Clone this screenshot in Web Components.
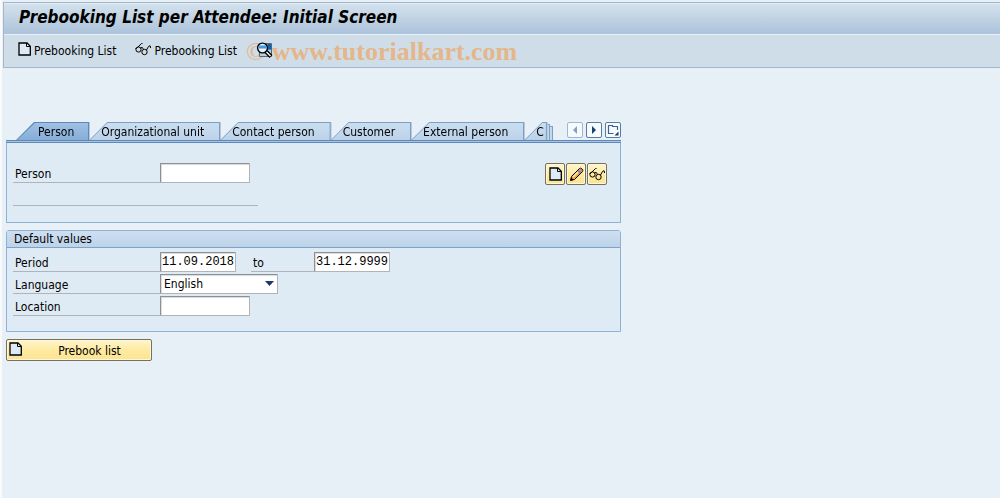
<!DOCTYPE html>
<html lang="en">
<head>
<meta charset="utf-8">
<title>Prebooking List per Attendee: Initial Screen</title>
<style>
  html { height: 100%; background: #e8f0f7; }
  body { margin: 0; min-height: 100%; box-sizing: border-box; border-left: 2px solid #f8fafc; font: 12px/16px "DejaVu Sans Condensed", "DejaVu Sans", Tahoma, sans-serif; color: #000; }
</style>
</head>
<body>
<prebooking-screen></prebooking-screen>
<script>
const define = (name, html, setup) => {
  const template = document.createElement('template');
  template.innerHTML = html;
  customElements.define(name, class extends HTMLElement {
    connectedCallback() {
      if (this.shadowRoot) return;
      this.attachShadow({ mode: 'open' }).append(template.content.cloneNode(true));
      if (setup) setup(this, this.shadowRoot);
    }
  });
};

const icons = {
  page: [13, 14, '<path d="M1.500 .5H8.500L12.500 4.500V13.500H1.500Z" fill="#dcebf6"/><path d="M8.500 .5V4.500H12.500Z" fill="#fff"/><path d="M1 1H9L12.300 4.300V13H1Z" fill="none" stroke="#000" stroke-width="1.300"/><path d="M8.500 1V4.500H12" fill="none" stroke="#000"/>'],
  glasses: [16, 14, '<g fill="none" stroke="#000"><path d="M.5 6.500H1.500L6.500 1.500H7.500M11.500 8L13.500 4.500Q15.500 2.500 15.500 5V6"/><circle cx="3.500" cy="7.500" r="2.600"/><circle cx="9.500" cy="10" r="2.700"/><path d="M5.500 6Q7.500 4 8.500 7.500"/></g>'],
  pencil: [15, 15, '<path d="M1.500 13.500L2.500 9.500L10.500 1.500Q12 .5 13 2Q14.500 3 13.500 4.500L5.500 12.500Z" fill="#f9a238" stroke="#000"/><path d="M4 10L10 4" stroke="#ffe8a8" stroke-width="1.700"/><path d="M9 3.500L11.500 6" stroke="#5b8fd6" stroke-width="2"/><path d="M11 2L13 4" stroke="#ee7a62" stroke-width="2"/><path d="M1.500 13.500L2.300 10.500L4.500 12.700Z" fill="#000"/>'],
  preview: [17, 16, '<path d="M3.500 1.500H15.500V14.500H3.500Z" fill="#b9cfe0" stroke="#5a6570"/><path d="M4 2H15V8H4Z" fill="#2d8fe0"/><path d="M12 2H15V7H12Z" fill="#0d61b5"/><circle cx="6.500" cy="6" r="4.900" fill="#e8f2fa" stroke="#000" stroke-width="1.400"/><path d="M3 3.500H10V6.500H3Z" fill="#3f9be6"/><path d="M10 9.500L15 14.500" stroke="#000" stroke-width="4"/><path d="M10.500 10L14.500 14" stroke="#fff" stroke-width="1.400"/>'],
  left: [8, 10, '<path d="M6 1V9L2 5Z" fill="#7fa2c5"/>'],
  right: [8, 10, '<path d="M2 1V9L6 5Z" fill="#173f68"/>'],
  tablist: [12, 12, '<path d="M6.500 9.500H1.500V1.500H5.500V2.500H10.500V6" fill="none" stroke="#3f658c" stroke-width="1.200"/><path d="M11.500 7.500V11.500H7.500Z" fill="#173f68"/>'],
  arrow: [9, 6, '<path d="M0 0H9L4.500 5Z" fill="#1f3864"/>']
};
define('sap-icon', '<style>:host{display:block;flex:none;line-height:0}svg{display:block}</style>', (el, root) => {
  const [w, h, art] = icons[el.getAttribute('name')];
  root.innerHTML += `<svg width="${w}" height="${h}" viewBox="0 0 ${w} ${h}" aria-hidden="true">${art}</svg>`;
});

const addIconAndLabel = (el, root) => {
  const button = root.querySelector('button');
  button.insertAdjacentHTML('afterbegin', `<sap-icon name="${el.getAttribute('icon')}"></sap-icon>`);
  if (el.hasAttribute('label')) button.setAttribute('aria-label', el.getAttribute('label'));
};

define('sap-title', `<style>
  :host{display:block;box-sizing:border-box;height:32px;padding:3px 15px 0;background:linear-gradient(#d3e1ed,#c0d2e2 50%,#acc3dc);border-bottom:1px solid #e9f0f6;border-top:1px solid #e3ecf4}
  h1{margin:0;font-size:17px;line-height:20px;font-weight:bold;font-style:italic;white-space:nowrap}
</style><h1><slot></slot></h1>`);

define('sap-toolbar', `<style>
  :host{display:flex;align-items:flex-start;box-sizing:border-box;height:32px;padding:7px 14px 0;gap:19px;background:#cfdde8;position:relative}
</style><slot></slot>`);

define('sap-action', `<style>
  :host{display:block;position:relative;z-index:1}
  button{display:flex;align-items:flex-start;gap:3px;margin:0;padding:0;border:0;background:none;font:inherit;color:inherit;white-space:nowrap}
  span{padding-top:1px}
</style><button type="button"><span><slot></slot></span></button>`, addIconAndLabel);

define('sap-watermark', `<style>
  :host{position:absolute;left:242px;top:1px;font:bold 26px/32px "Liberation Serif",serif;color:#e4b68a;pointer-events:none;white-space:nowrap;display:flex;gap:6px}
  .c{font-weight:normal}
</style><span class="c">©</span><span><slot></slot></span>`);

define('sap-tab', `<style>
  :host{display:block;flex:none;filter:drop-shadow(1px 0 0 #b7c8d9)}
  .edge{background:#7b9fc6;clip-path:polygon(0 100%,18px 0,100% 0,100% 100%);padding:1px 1px 0}
  button{display:block;box-sizing:border-box;margin:0;border:0;height:17px;padding:2px 15px 0 11px;font:inherit;line-height:15px;color:inherit;white-space:nowrap;background:linear-gradient(#cbdef0,#bbd2e8);clip-path:polygon(0 100%,17px 0,100% 0,100% 100%)}
  :host([selected]) .edge{background:#6089b8}
  :host([selected]) button{background:linear-gradient(#9fc0e3,#87aed8);padding:2px 14px 0 21px;clip-path:polygon(0 100%,18px 0,100% 0,100% 100%)}
  :host([cut]) button{padding-right:2px}
</style><div class="edge"><button type="button" role="tab"><slot></slot></button></div>`, (el, root) => {
  root.querySelector('button').setAttribute('aria-selected', el.hasAttribute('selected'));
});

define('sap-tab-nav', `<style>
  :host{display:flex;gap:3px;align-self:flex-start}
  button{display:grid;place-items:center;box-sizing:border-box;width:16px;height:16px;margin:0;padding:0;border:1px solid #587da5;border-radius:2px;background:#f7fafd}
  button:disabled{border-color:#9db8d3}
</style>
<button type="button" aria-label="Scroll left" disabled><sap-icon name="left"></sap-icon></button>
<button type="button" aria-label="Scroll right"><sap-icon name="right"></sap-icon></button>
<button type="button" aria-label="Tab list"><sap-icon name="tablist"></sap-icon></button>`);

define('sap-tabstrip', `<style>
  :host{display:block}
  .bar{display:flex;align-items:flex-end;height:18px;padding-left:10px}
  .tabs{display:flex}
  .stack{display:flex;align-items:flex-end}
  .stack i{box-sizing:border-box;width:3px;height:16px;background:#c5d9ec;border:solid #7b9fc6;border-width:1px 1px 0 0}
  .stack i + i{height:14px}
  sap-tab-nav{margin-left:auto}
  .panel{box-sizing:border-box;border:1px solid #8fb1d3;border-top:0;background:#dfebf4;min-height:83px}
  .panel::before{content:"";display:block;height:1px;margin:0 -1px;background:#a5c4e5;border:solid #6089b8;border-width:1px 0}
</style>
<div class="bar"><div class="tabs" role="tablist"><slot name="tab"></slot></div><div class="stack"><i></i><i></i></div><sap-tab-nav></sap-tab-nav></div>
<div class="panel"><slot></slot></div>`);

define('sap-group', `<style>
  :host{display:block;box-sizing:border-box;border:1px solid #8fb1d3;border-radius:3px 3px 0 0;background:#dfebf4;padding-bottom:13px}
  h2{margin:0;padding:0 7px;font:inherit;line-height:16px;background:linear-gradient(#cfdff0,#bdd3e8);border-bottom:1px solid #7fa2c9}
  div{padding:4px 6px 0}
</style><h2><slot name="heading"></slot></h2><div><slot></slot></div>`);

const box = `box-sizing:border-box;height:20px;margin:0;border:1px solid #b0b4b8;border-top-color:#8c9094;border-left-color:#8c9094;border-radius:1px;background-color:#fff;box-shadow:inset 1px 1px 1px #d8dadc;color:#000;`;

define('sap-field', `<style>
  :host{display:flex;height:22px;align-items:flex-start}
  label{box-sizing:border-box;width:147px;height:20px;padding:3px 2px 0;border-bottom:1px solid #b0b4b8}
  :host([short]) label{width:63px}
  input{${box}width:90px;padding:0 1px;font:12px "Liberation Mono",monospace}
  :host([date]) input{width:76px}
</style><label for="f"><slot></slot></label><input id="f" type="text">`, (el, root) => {
  root.querySelector('input').value = el.getAttribute('value') || '';
});

define('sap-choice', `<style>
  :host{display:flex;height:22px;align-items:flex-start}
  label{box-sizing:border-box;width:147px;height:20px;padding:3px 2px 0;border-bottom:1px solid #b0b4b8}
  span{display:grid;align-items:center;justify-items:end}
  select,sap-icon{grid-area:1/1}
  sap-icon{margin-right:4px;pointer-events:none}
  select{${box}width:118px;appearance:none;padding:0 3px;font:inherit}
</style><label for="f"><slot></slot></label><span><select id="f"><option>English</option></select><sap-icon name="arrow"></sap-icon></span>`);

define('sap-push', `<style>
  :host{display:block}
  button{display:flex;align-items:center;box-sizing:border-box;height:22px;margin:0;padding:0 2px;border:1px solid #77705a;border-radius:2px;background:linear-gradient(#fff6cf,#feeaa0 50%,#fbe491);box-shadow:inset 0 0 0 1px #fdf6d8;font:inherit;color:inherit}
  :host([icon-only]) button{justify-content:center;padding:0;width:20px}
  :host(:not([icon-only])) button{width:146px}
  :host(:not([icon-only])) sap-icon{align-self:flex-start;padding-top:2px}
  span{flex:1;text-align:center;padding:1px 8px 0 16px}
  :host([icon-only]) span{display:none}
</style><button type="button"><span><slot></slot></span></button>`, addIconAndLabel);

define('prebooking-screen', `<style>
  :host{display:block}
  header{margin:2px 0 0 1px;border:1px solid #a3b7ca;border-width:1px 0 1px 1px}
  main{box-sizing:border-box;max-width:619px;padding:54px 0 0 4px}
  .person{display:flex;justify-content:space-between;align-items:flex-end;height:42px;padding:0 13px 0 6px}
  .buttons{display:flex;gap:1px}
  .rule{width:245px;height:1px;background:#b0b4b8;margin:20px 0 0 6px}
  sap-group{margin:7px 0}
  .dates{display:flex;gap:15px}
</style>
<header>
  <sap-title>Prebooking List per Attendee: Initial Screen</sap-title>
  <sap-toolbar>
    <sap-action icon="page">Prebooking List</sap-action>
    <sap-action icon="glasses">Prebooking List</sap-action>
    <sap-action icon="preview" label="Preview"></sap-action>
    <sap-watermark>www.tutorialkart.com</sap-watermark>
  </sap-toolbar>
</header>
<main>
  <sap-tabstrip>
    <sap-tab slot="tab" selected>Person</sap-tab>
    <sap-tab slot="tab">Organizational unit</sap-tab>
    <sap-tab slot="tab">Contact person</sap-tab>
    <sap-tab slot="tab">Customer</sap-tab>
    <sap-tab slot="tab">External person</sap-tab>
    <sap-tab slot="tab" cut>C</sap-tab>
    <div class="person">
      <sap-field>Person</sap-field>
      <div class="buttons">
        <sap-push icon="page" icon-only label="Create"></sap-push>
        <sap-push icon="pencil" icon-only label="Change"></sap-push>
        <sap-push icon="glasses" icon-only label="Display"></sap-push>
      </div>
    </div>
    <div class="rule"></div>
  </sap-tabstrip>
  <sap-group>
    <span slot="heading">Default values</span>
    <div class="dates">
      <sap-field date value="11.09.2018">Period</sap-field>
      <sap-field date short value="31.12.9999">to</sap-field>
    </div>
    <sap-choice>Language</sap-choice>
    <sap-field>Location</sap-field>
  </sap-group>
  <sap-push icon="page">Prebook list</sap-push>
</main>`);
</script>
</body>
</html>
